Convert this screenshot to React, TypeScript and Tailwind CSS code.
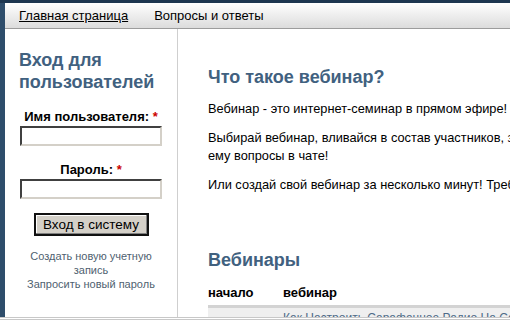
import React from 'react';

const font = { fontFamily: '"Liberation Sans", Arial, sans-serif' };

const App: React.FC = () => {
    return (
        <div className="w-[510px] h-[320px] overflow-hidden bg-white flex flex-col text-black" style={font}>
            {/* top dark strip */}
            <div className="h-[3px] bg-[#1d3650] shrink-0"></div>
            <div className="flex flex-1 min-h-0">
                {/* left dark edge */}
                <div className="w-[5px] bg-[#2e4d6b] shrink-0"></div>
                <div className="flex-1 flex flex-col min-w-0">
                    {/* Nav */}
                    <nav className="h-[26px] shrink-0 flex items-center gap-[26px] pl-[14px] text-[13px] bg-gradient-to-b from-white to-[#dcdcdc] border-b border-[#9c9c9c]">
                        <a className="underline text-black">Главная страница</a>
                        <a className="text-black">Вопросы и ответы</a>
                    </nav>

                    <div className="flex flex-1 min-h-0">
                        {/* Sidebar */}
                        <aside className="w-[173px] shrink-0 border-r border-[#cfcfcf] pt-[20px] px-[14px]">
                            <h2 className="text-[18px] leading-[22px] font-bold text-[#41617f]">Вход для пользователей</h2>
                            <form className="mt-[16px] flex flex-col items-center">
                                <label className="text-[13px] font-bold leading-[16px]">
                                    Имя пользователя: <span className="text-[#cc0000]">*</span>
                                </label>
                                <input className="mt-[1px] w-[142px] h-[20px] border-2 border-t-[#404040] border-l-[#404040] border-b-[#d4d0c8] border-r-[#d4d0c8] bg-white outline-none" />
                                <label className="mt-[16px] text-[13px] font-bold leading-[16px]">
                                    Пароль: <span className="text-[#cc0000]">*</span>
                                </label>
                                <input type="password" className="mt-[1px] w-[142px] h-[20px] border-2 border-t-[#404040] border-l-[#404040] border-b-[#d4d0c8] border-r-[#d4d0c8] bg-white outline-none" />
                                <button type="button" className="mt-[14px] w-[115px] h-[23px] bg-[#d4d0c8] border-2 border-[#111] text-[13.5px] leading-none shadow-[inset_-1px_-1px_0_#808080,inset_1px_1px_0_#ffffff]">
                                    Вход в систему
                                </button>
                            </form>
                            <ul className="mt-[13px] text-center text-[11px] leading-[14px] text-[#4f5f70]">
                                <li>Создать новую учетную запись</li>
                                <li>Запросить новый пароль</li>
                            </ul>
                        </aside>

                        {/* Main */}
                        <main className="flex-1 min-w-0 pl-[30px] pt-[37px] overflow-hidden">
                            <h1 className="text-[18px] font-bold text-[#41617f] leading-[22px]">Что такое вебинар?</h1>
                            <div className="mt-[12px] text-[12.8px] leading-[18px] whitespace-nowrap space-y-[11px]">
                                <p>Вебинар - это интернет-семинар в прямом эфире!</p>
                                <p>
                                    Выбирай вебинар, вливайся в состав участников, задавай
                                    <br />
                                    ему вопросы в чате!
                                </p>
                                <p>Или создай свой вебинар за несколько минут! Требуется только браузер.</p>
                            </div>

                            <h2 className="mt-[55px] text-[18px] font-bold text-[#41617f] leading-[22px]">Вебинары</h2>
                            <table className="mt-[12px] w-[400px] text-left">
                                <thead>
                                    <tr className="text-[13px] font-bold border-b-[3px] border-[#d3d3d3]">
                                        <th className="w-[75px] pb-[2px]">начало</th>
                                        <th className="pb-[2px]">вебинар</th>
                                    </tr>
                                </thead>
                                <tbody>
                                    <tr className="bg-[#efefef] text-[12px]">
                                        <td></td>
                                        <td className="pt-[3px] leading-[14px] text-[#4d6a87] underline whitespace-nowrap">Как Настроить Сарафанное Радио На Сайте</td>
                                    </tr>
                                </tbody>
                            </table>
                        </main>
                    </div>
                </div>
            </div>
            {/* bottom rule */}
            <div className="h-[3px] shrink-0 border-t border-b border-[#c8c8c8] bg-white"></div>
        </div>
    );
};

export default App;
